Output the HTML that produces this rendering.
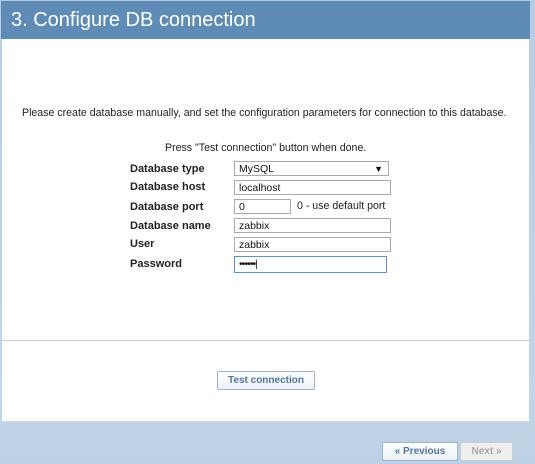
<!DOCTYPE html>
<html><head><style>
body{margin:0;width:535px;height:464px;overflow:hidden;background:linear-gradient(180deg,#b9cde2 0%,#c3d5e8 85%,#bcd0e5 100%);font-family:"Liberation Sans",sans-serif;position:relative}
.hdr{position:absolute;left:1px;top:1px;width:529px;height:38px;background:#5f8cb6;color:#fff;font-size:20px;line-height:38px;padding-left:10px;box-sizing:border-box}
.panel{position:absolute;left:2px;top:39px;width:527px;height:382px;background:#fff;border-bottom:1px solid #d0d6dc}
.sep{position:absolute;left:2px;top:340px;width:527px;height:1px;background:#ccc}
.t{position:absolute;font-size:10.6px;color:#222;white-space:nowrap}
.l{position:absolute;left:130px;font-size:11px;font-weight:bold;color:#222}
.in{position:absolute;left:234px;height:15px;border:1px solid #aaa;box-sizing:border-box;font-size:10.5px;line-height:14px;padding-left:4px;color:#111;background:#fff}
.btn{position:absolute;border:1px solid #9eb4cc;border-radius:2px;background:linear-gradient(#fff,#eef2f7);color:#4f76a0;font-weight:bold;font-size:10px;text-align:center;box-sizing:border-box}
</style></head><body>
<div class="hdr">3. Configure DB connection</div>
<div class="panel"></div>
<div class="sep"></div>
<div class="t" style="left:22px;top:107px">Please create database manually, and set the configuration parameters for connection to this database.</div>
<div class="t" style="left:165px;top:142px">Press "Test connection" button when done.</div>
<div class="l" style="top:163px">Database type</div>
<div class="in" style="top:161px;width:155px">MySQL<span style="position:absolute;right:5px;font-size:9px">▼</span></div>
<div class="l" style="top:181px">Database host</div>
<div class="in" style="top:180px;width:157px">localhost</div>
<div class="l" style="top:201px">Database port</div>
<div class="in" style="top:199px;width:57px">0</div>
<div class="t" style="left:297px;top:200px">0 - use default port</div>
<div class="l" style="top:220px">Database name</div>
<div class="in" style="top:218px;width:157px">zabbix</div>
<div class="l" style="top:238px">User</div>
<div class="in" style="top:237px;width:157px">zabbix</div>
<div class="l" style="top:258px">Password</div>
<div class="in" style="top:256px;width:153px;height:17px;border:1px solid #5b8fd6;letter-spacing:-1px">••••••|</div>
<div class="btn" style="left:217px;top:371px;width:98px;height:19px;line-height:17px">Test connection</div>
<div class="btn" style="left:382px;top:442px;width:76px;height:19px;line-height:17px">« Previous</div>
<div class="btn" style="left:460px;top:442px;width:53px;height:19px;line-height:17px;color:#aaa;border-color:#ccc;background:#eee">Next »</div>
</body></html>
